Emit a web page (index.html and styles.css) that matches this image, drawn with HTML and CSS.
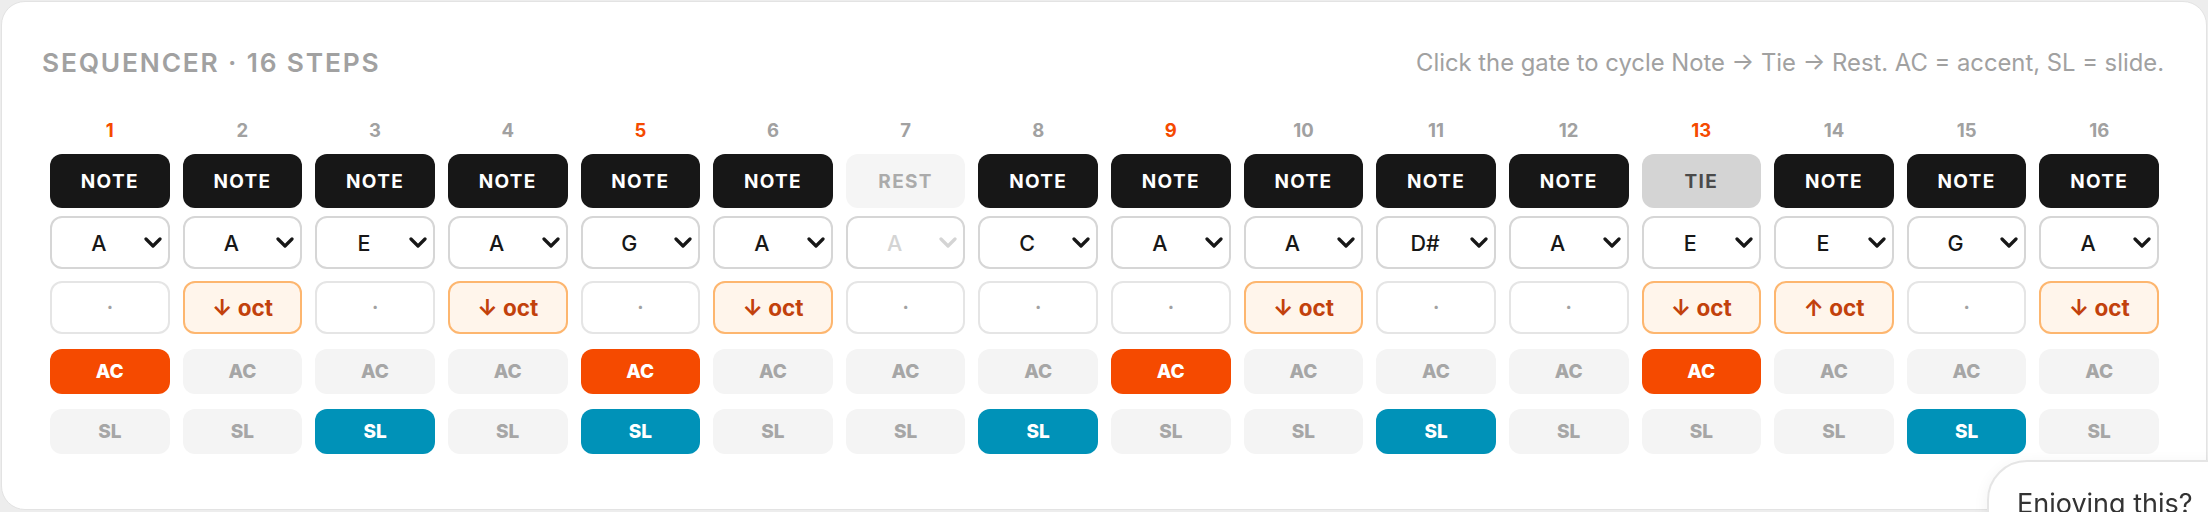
FILE: index.html
```html
<!DOCTYPE html>
<html lang="en">
<head>
<meta charset="utf-8">
<title>Sequencer</title>
<link rel="stylesheet" href="styles.css">
</head>
<body>
<main class="card">
  <header class="head">
    <h2 class="title">SEQUENCER · 16 STEPS</h2>
    <p class="hint">Click the gate to cycle Note → Tie → Rest. AC = accent, SL = slide.</p>
  </header>
  <div class="grid">
    <div class="step"><div class="num beat">1</div><button class="gate note">NOTE</button><div class="sel"><span class="val">A</span><svg class="chev" viewBox="0 0 18 11"><path d="M2 2 L9 9 L16 2"/></svg></div><div class="oct">·</div><button class="tog ac on">AC</button><button class="tog sl">SL</button></div>
    <div class="step"><div class="num">2</div><button class="gate note">NOTE</button><div class="sel"><span class="val">A</span><svg class="chev" viewBox="0 0 18 11"><path d="M2 2 L9 9 L16 2"/></svg></div><div class="oct shift">↓ oct</div><button class="tog ac">AC</button><button class="tog sl">SL</button></div>
    <div class="step"><div class="num">3</div><button class="gate note">NOTE</button><div class="sel"><span class="val">E</span><svg class="chev" viewBox="0 0 18 11"><path d="M2 2 L9 9 L16 2"/></svg></div><div class="oct">·</div><button class="tog ac">AC</button><button class="tog sl on">SL</button></div>
    <div class="step"><div class="num">4</div><button class="gate note">NOTE</button><div class="sel"><span class="val">A</span><svg class="chev" viewBox="0 0 18 11"><path d="M2 2 L9 9 L16 2"/></svg></div><div class="oct shift">↓ oct</div><button class="tog ac">AC</button><button class="tog sl">SL</button></div>
    <div class="step"><div class="num beat">5</div><button class="gate note">NOTE</button><div class="sel"><span class="val">G</span><svg class="chev" viewBox="0 0 18 11"><path d="M2 2 L9 9 L16 2"/></svg></div><div class="oct">·</div><button class="tog ac on">AC</button><button class="tog sl on">SL</button></div>
    <div class="step"><div class="num">6</div><button class="gate note">NOTE</button><div class="sel"><span class="val">A</span><svg class="chev" viewBox="0 0 18 11"><path d="M2 2 L9 9 L16 2"/></svg></div><div class="oct shift">↓ oct</div><button class="tog ac">AC</button><button class="tog sl">SL</button></div>
    <div class="step"><div class="num">7</div><button class="gate rest">REST</button><div class="sel off"><span class="val">A</span><svg class="chev" viewBox="0 0 18 11"><path d="M2 2 L9 9 L16 2"/></svg></div><div class="oct">·</div><button class="tog ac">AC</button><button class="tog sl">SL</button></div>
    <div class="step"><div class="num">8</div><button class="gate note">NOTE</button><div class="sel"><span class="val">C</span><svg class="chev" viewBox="0 0 18 11"><path d="M2 2 L9 9 L16 2"/></svg></div><div class="oct">·</div><button class="tog ac">AC</button><button class="tog sl on">SL</button></div>
    <div class="step"><div class="num beat">9</div><button class="gate note">NOTE</button><div class="sel"><span class="val">A</span><svg class="chev" viewBox="0 0 18 11"><path d="M2 2 L9 9 L16 2"/></svg></div><div class="oct">·</div><button class="tog ac on">AC</button><button class="tog sl">SL</button></div>
    <div class="step"><div class="num">10</div><button class="gate note">NOTE</button><div class="sel"><span class="val">A</span><svg class="chev" viewBox="0 0 18 11"><path d="M2 2 L9 9 L16 2"/></svg></div><div class="oct shift">↓ oct</div><button class="tog ac">AC</button><button class="tog sl">SL</button></div>
    <div class="step"><div class="num">11</div><button class="gate note">NOTE</button><div class="sel"><span class="val">D#</span><svg class="chev" viewBox="0 0 18 11"><path d="M2 2 L9 9 L16 2"/></svg></div><div class="oct">·</div><button class="tog ac">AC</button><button class="tog sl on">SL</button></div>
    <div class="step"><div class="num">12</div><button class="gate note">NOTE</button><div class="sel"><span class="val">A</span><svg class="chev" viewBox="0 0 18 11"><path d="M2 2 L9 9 L16 2"/></svg></div><div class="oct">·</div><button class="tog ac">AC</button><button class="tog sl">SL</button></div>
    <div class="step"><div class="num beat">13</div><button class="gate tie">TIE</button><div class="sel"><span class="val">E</span><svg class="chev" viewBox="0 0 18 11"><path d="M2 2 L9 9 L16 2"/></svg></div><div class="oct shift">↓ oct</div><button class="tog ac on">AC</button><button class="tog sl">SL</button></div>
    <div class="step"><div class="num">14</div><button class="gate note">NOTE</button><div class="sel"><span class="val">E</span><svg class="chev" viewBox="0 0 18 11"><path d="M2 2 L9 9 L16 2"/></svg></div><div class="oct shift">↑ oct</div><button class="tog ac">AC</button><button class="tog sl">SL</button></div>
    <div class="step"><div class="num">15</div><button class="gate note">NOTE</button><div class="sel"><span class="val">G</span><svg class="chev" viewBox="0 0 18 11"><path d="M2 2 L9 9 L16 2"/></svg></div><div class="oct">·</div><button class="tog ac">AC</button><button class="tog sl on">SL</button></div>
    <div class="step"><div class="num">16</div><button class="gate note">NOTE</button><div class="sel"><span class="val">A</span><svg class="chev" viewBox="0 0 18 11"><path d="M2 2 L9 9 L16 2"/></svg></div><div class="oct shift">↓ oct</div><button class="tog ac">AC</button><button class="tog sl">SL</button></div>
  </div>
</main>
<aside class="feedback"><span class="fb-text">Enjoying this?</span></aside>
</body>
</html>
```
FILE: styles.css
```css
* { box-sizing: border-box; }
html, body { height: 100%; }
body {
  margin: 0;
  padding: 1px 1px 0 1px;
  background: #ededed;
  font-family: Inter, "Noto Sans", "Liberation Sans", sans-serif;
  overflow: hidden;
}
.card {
  height: 509px;
  background: #ffffff;
  border: 1.5px solid #e3e3e3;
  border-radius: 24px;
  padding: 46px 40px 0 40px;
}
.head {
  display: flex;
  align-items: center;
  justify-content: space-between;
  height: 30px;
}
.title {
  margin: 0;
  font-size: 26.3px;
  line-height: 30px;
  font-weight: 600;
  letter-spacing: 0.07em;
  color: #a1a1a1;
}
.hint {
  margin: 0;
  font-size: 23.8px;
  line-height: 30px;
  font-weight: 400;
  color: #a1a1a1;
  padding-right: 2px;
}
.grid {
  display: grid;
  grid-template-columns: repeat(16, 1fr);
  column-gap: 13px;
  margin: 41px 7px 0 8px;
}
.step {
  display: flex;
  flex-direction: column;
  min-width: 0;
}
.num {
  text-align: center;
  font-size: 18.5px;
  line-height: 22px;
  font-weight: 700;
  color: #a1a1a1;
}
.num.beat { color: #f54a00; }
button {
  font-family: inherit;
  border: 0;
  padding: 0;
  margin: 0;
  cursor: pointer;
}
.gate {
  margin-top: 13px;
  height: 54px;
  border-radius: 12px;
  font-size: 19px;
  font-weight: 700;
  letter-spacing: 0.07em;
}
.gate.note { background: #171717; color: #ffffff; }
.gate.rest { background: #f5f5f5; color: #ababab; }
.gate.tie { background: #d4d4d4; color: #4a4a4a; }
.sel {
  margin-top: 8px;
  height: 53px;
  border: 2px solid #d6d6d6;
  border-radius: 12px;
  display: flex;
  align-items: center;
  padding-right: 6px;
  color: #171717;
}
.sel .val {
  flex: 1;
  text-align: center;
  font-size: 21.5px;
  font-weight: 500;
  padding-left: 2px;
}
.chev {
  width: 18px;
  height: 11px;
  fill: none;
  stroke: currentColor;
  stroke-width: 3.2;
  stroke-linecap: round;
  stroke-linejoin: round;
}
.sel.off { color: #d4d4d4; }
.oct {
  margin-top: 12px;
  height: 53px;
  border: 2px solid #e5e5e5;
  border-radius: 12px;
  display: flex;
  align-items: center;
  justify-content: center;
  font-size: 19px;
  font-weight: 700;
  color: #a1a1a1;
  background: #ffffff;
}
.oct.shift {
  background: #fff5eb;
  border-color: #fdb66f;
  color: #c2410c;
  font-size: 22.5px;
}
.tog {
  margin-top: 15px;
  height: 45px;
  border-radius: 12px;
  font-size: 19px;
  font-weight: 800;
  background: #f4f4f4;
  color: #a6a6a6;
}
.tog.ac.on { background: #f54a00; color: #ffffff; }
.tog.sl.on { background: #0092b8; color: #ffffff; }
.feedback {
  position: fixed;
  left: 1987px;
  top: 460px;
  width: 300px;
  height: 120px;
  background: #ffffff;
  border: 2px solid #e5e5e5;
  border-radius: 40px 0 0 0;
  padding: 25px 0 0 28px;
  box-shadow: 0 4px 16px rgba(0,0,0,0.06);
}
.fb-text {
  font-size: 27px;
  line-height: 34px;
  color: #333333;
  white-space: nowrap;
}
```
